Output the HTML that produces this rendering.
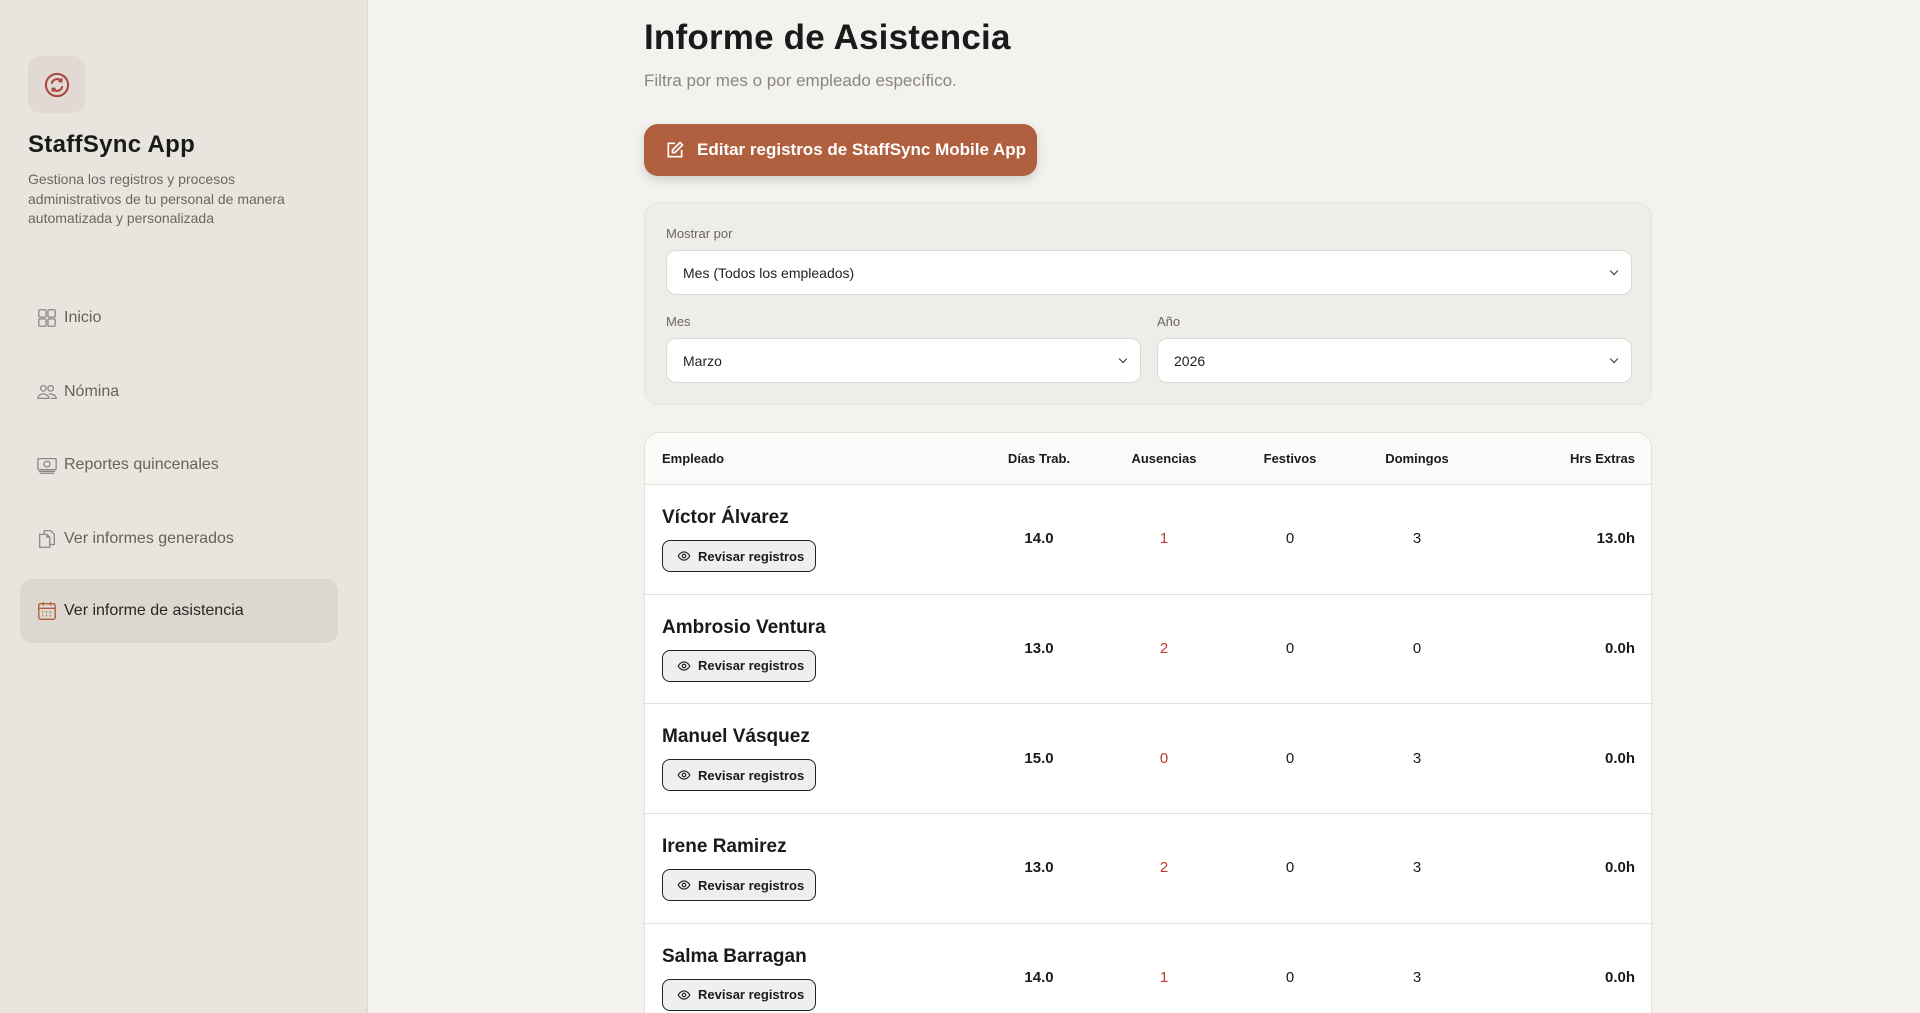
<!DOCTYPE html>
<html><head><meta charset="utf-8"><style>
*{box-sizing:border-box;margin:0;padding:0}
html,body{width:1920px;height:1013px;overflow:hidden}
body{background:#f3f2ee;font-family:"Liberation Sans",sans-serif;color:#1a1a1a;position:relative}
.side{position:absolute;left:0;top:0;width:368px;height:1013px;background:#e8e5de;border-right:1px solid #dcd8d0}
.logo{position:absolute;left:28px;top:56px;width:57px;height:57px;border-radius:12px;background:#e2d9d4;display:flex;align-items:center;justify-content:center}
.brand{position:absolute;left:28px;top:131px;font-size:24px;font-weight:900;letter-spacing:.3px}
.desc{position:absolute;left:28px;top:170px;width:285px;font-size:14px;line-height:19.5px;color:#6a6660}
.nav{position:absolute;left:20px;width:318px;height:64px;border-radius:12px;display:flex;align-items:center;padding-left:16px;font-size:16px;color:#66625c}
.nav svg{margin-right:6px}
.nav.act{background:#dcd8d0;color:#2a2724}
.main{position:absolute;left:644px;top:0;width:1008px}
h1{position:absolute;top:18px;font-size:35px;font-weight:900;letter-spacing:.2px;white-space:nowrap}
.sub{position:absolute;top:71px;font-size:17px;color:#8a8680;white-space:nowrap}
.btn{position:absolute;top:124px;left:0;width:393px;height:52px;border-radius:14px;background:#b0603f;color:#fff;font-weight:700;font-size:17px;display:flex;align-items:center;padding-left:21px;box-shadow:0 4px 10px rgba(0,0,0,.15);white-space:nowrap}
.btn svg{margin-right:12px}
.card{position:absolute;top:202px;left:0;width:1008px;height:203px;border:1px solid #e5e2dc;border-radius:16px;background:#efede9}
.lbl{position:absolute;font-size:13px;color:#6a6660}
.sel{position:absolute;height:45px;background:#fff;border:1px solid #ddd9d2;border-radius:10px;font-size:14px;display:flex;align-items:center;padding-left:16px;color:#222}
.sel:after{content:"";position:absolute;right:14px;top:17px;width:5px;height:5px;border-right:1.5px solid #333;border-bottom:1.5px solid #333;transform:rotate(45deg)}
.tbl{position:absolute;top:432px;left:0;width:1008px;height:600px;border:1px solid #e3e0da;border-radius:16px;background:#fff;overflow:hidden}
.hd{height:52px;background:#fafaf9;border-bottom:1px solid #e3e0da;position:relative;font-size:13px;font-weight:700}
.row{height:109.7px;border-bottom:1px solid #e3e0da;position:relative;font-size:15px}
.c{position:absolute;transform:translateX(-50%);top:50%;margin-top:-9px}
.hd .c{margin-top:-8px}
.r{position:absolute;right:16px;top:50%;margin-top:-9px}
.name{position:absolute;left:17px;top:22px;font-size:19px;font-weight:900;white-space:nowrap}
.rev{position:absolute;left:17px;top:55px;width:154px;height:32px;border:1.5px solid #222;border-radius:8px;background:#efefef;font-size:13px;font-weight:700;display:flex;align-items:center;padding-left:14px}
.rev svg{margin-right:7px}
.red{color:#c0392b}
</style></head><body>
<div class="side">
<div class="logo"><svg width="28" height="28" viewBox="0 0 24 24" fill="none" stroke="#a84a40" stroke-width="1.8"><circle cx="12" cy="12" r="9.5"/><path d="M7.5 11a4.5 4.5 0 0 1 8-2.3M16.5 13a4.5 4.5 0 0 1-8 2.3"/><path d="M15.8 6.3v2.6h-2.6M8.2 17.7v-2.6h2.6"/></svg></div>
<div class="brand">StaffSync App</div>
<div class="desc">Gestiona los registros y procesos administrativos de tu personal de manera automatizada y personalizada</div>
<div class="nav" style="top:286px"><svg width="22" height="22" viewBox="0 0 24 24" fill="none" stroke="#888" stroke-width="1.4"><rect x="3" y="3" width="8" height="8" rx="1.5"/><rect x="13" y="3" width="8" height="8" rx="1.5"/><rect x="3" y="13" width="8" height="8" rx="1.5"/><rect x="13" y="13" width="8" height="8" rx="1.5"/></svg>Inicio</div>
<div class="nav" style="top:360px"><svg width="22" height="22" viewBox="0 0 24 24" fill="none" stroke="#888" stroke-width="1.4"><circle cx="8" cy="8" r="3"/><circle cx="16" cy="8" r="3"/><path d="M2 19c0-3 3-5 6-5s6 2 6 5zM14 14c3 0 8 1 8 5h-6"/></svg>Nómina</div>
<div class="nav" style="top:433px"><svg width="22" height="22" viewBox="0 0 24 24" fill="none" stroke="#888" stroke-width="1.4"><rect x="2" y="5" width="20" height="12" rx="1"/><ellipse cx="12" cy="11" rx="3.5" ry="3"/><path d="M3 19h18M4 21h16"/></svg>Reportes quincenales</div>
<div class="nav" style="top:507px"><svg width="22" height="22" viewBox="0 0 24 24" fill="none" stroke="#888" stroke-width="1.4"><path d="M4 7h8l3 3v11H4zM9 7V3h7l4 4v11h-5M12 7v3h3"/></svg>Ver informes generados</div>
<div class="nav act" style="top:579px"><svg width="22" height="22" viewBox="0 0 24 24" fill="none" stroke="#b0603f" stroke-width="1.5"><rect x="3" y="4" width="18" height="17" rx="2"/><path d="M3 9h18M8 2v4M16 2v4"/><path d="M7 13h1M11 13h1M15 13h1M7 17h1M11 17h1M15 17h1" stroke-width="2"/></svg>Ver informe de asistencia</div>
</div>
<div class="main">
<h1>Informe de Asistencia</h1>
<div class="sub">Filtra por mes o por empleado específico.</div>
<div class="btn"><svg width="20" height="20" viewBox="0 0 24 24" fill="none" stroke="#fff" stroke-width="2"><path d="M12 4H4v16h16v-8"/><path d="M18 3l3 3-9 9H9v-3z"/></svg>Editar registros de StaffSync Mobile App</div>
<div class="card">
<div class="lbl" style="left:21px;top:23px">Mostrar por</div>
<div class="sel" style="left:21px;top:47px;width:966px">Mes (Todos los empleados)</div>
<div class="lbl" style="left:21px;top:111px">Mes</div>
<div class="sel" style="left:21px;top:135px;width:475px">Marzo</div>
<div class="lbl" style="left:512px;top:111px">Año</div>
<div class="sel" style="left:512px;top:135px;width:475px">2026</div>
</div>
<div class="tbl">
<div class="hd"><span style="position:absolute;left:17px;top:18px">Empleado</span><span class="c" style="left:394px">Días Trab.</span><span class="c" style="left:519px">Ausencias</span><span class="c" style="left:645px">Festivos</span><span class="c" style="left:772px">Domingos</span><span class="r" style="margin-top:-8px">Hrs Extras</span></div>
<div class="row"><div class="name">Víctor Álvarez</div><div class="rev"><svg width="14" height="14" viewBox="0 0 24 24" fill="none" stroke="#222" stroke-width="2"><path d="M2 12s4-7 10-7 10 7 10 7-4 7-10 7S2 12 2 12z"/><circle cx="12" cy="12" r="3"/></svg>Revisar registros</div><b class="c" style="left:394px">14.0</b><span class="c red" style="left:519px">1</span><span class="c" style="left:645px">0</span><span class="c" style="left:772px">3</span><b class="r">13.0h</b></div>
<div class="row"><div class="name">Ambrosio Ventura</div><div class="rev"><svg width="14" height="14" viewBox="0 0 24 24" fill="none" stroke="#222" stroke-width="2"><path d="M2 12s4-7 10-7 10 7 10 7-4 7-10 7S2 12 2 12z"/><circle cx="12" cy="12" r="3"/></svg>Revisar registros</div><b class="c" style="left:394px">13.0</b><span class="c red" style="left:519px">2</span><span class="c" style="left:645px">0</span><span class="c" style="left:772px">0</span><b class="r">0.0h</b></div>
<div class="row"><div class="name">Manuel Vásquez</div><div class="rev"><svg width="14" height="14" viewBox="0 0 24 24" fill="none" stroke="#222" stroke-width="2"><path d="M2 12s4-7 10-7 10 7 10 7-4 7-10 7S2 12 2 12z"/><circle cx="12" cy="12" r="3"/></svg>Revisar registros</div><b class="c" style="left:394px">15.0</b><span class="c red" style="left:519px">0</span><span class="c" style="left:645px">0</span><span class="c" style="left:772px">3</span><b class="r">0.0h</b></div>
<div class="row"><div class="name">Irene Ramirez</div><div class="rev"><svg width="14" height="14" viewBox="0 0 24 24" fill="none" stroke="#222" stroke-width="2"><path d="M2 12s4-7 10-7 10 7 10 7-4 7-10 7S2 12 2 12z"/><circle cx="12" cy="12" r="3"/></svg>Revisar registros</div><b class="c" style="left:394px">13.0</b><span class="c red" style="left:519px">2</span><span class="c" style="left:645px">0</span><span class="c" style="left:772px">3</span><b class="r">0.0h</b></div>
<div class="row"><div class="name">Salma Barragan</div><div class="rev"><svg width="14" height="14" viewBox="0 0 24 24" fill="none" stroke="#222" stroke-width="2"><path d="M2 12s4-7 10-7 10 7 10 7-4 7-10 7S2 12 2 12z"/><circle cx="12" cy="12" r="3"/></svg>Revisar registros</div><b class="c" style="left:394px">14.0</b><span class="c red" style="left:519px">1</span><span class="c" style="left:645px">0</span><span class="c" style="left:772px">3</span><b class="r">0.0h</b></div>
</div>
</div>
</body></html>
